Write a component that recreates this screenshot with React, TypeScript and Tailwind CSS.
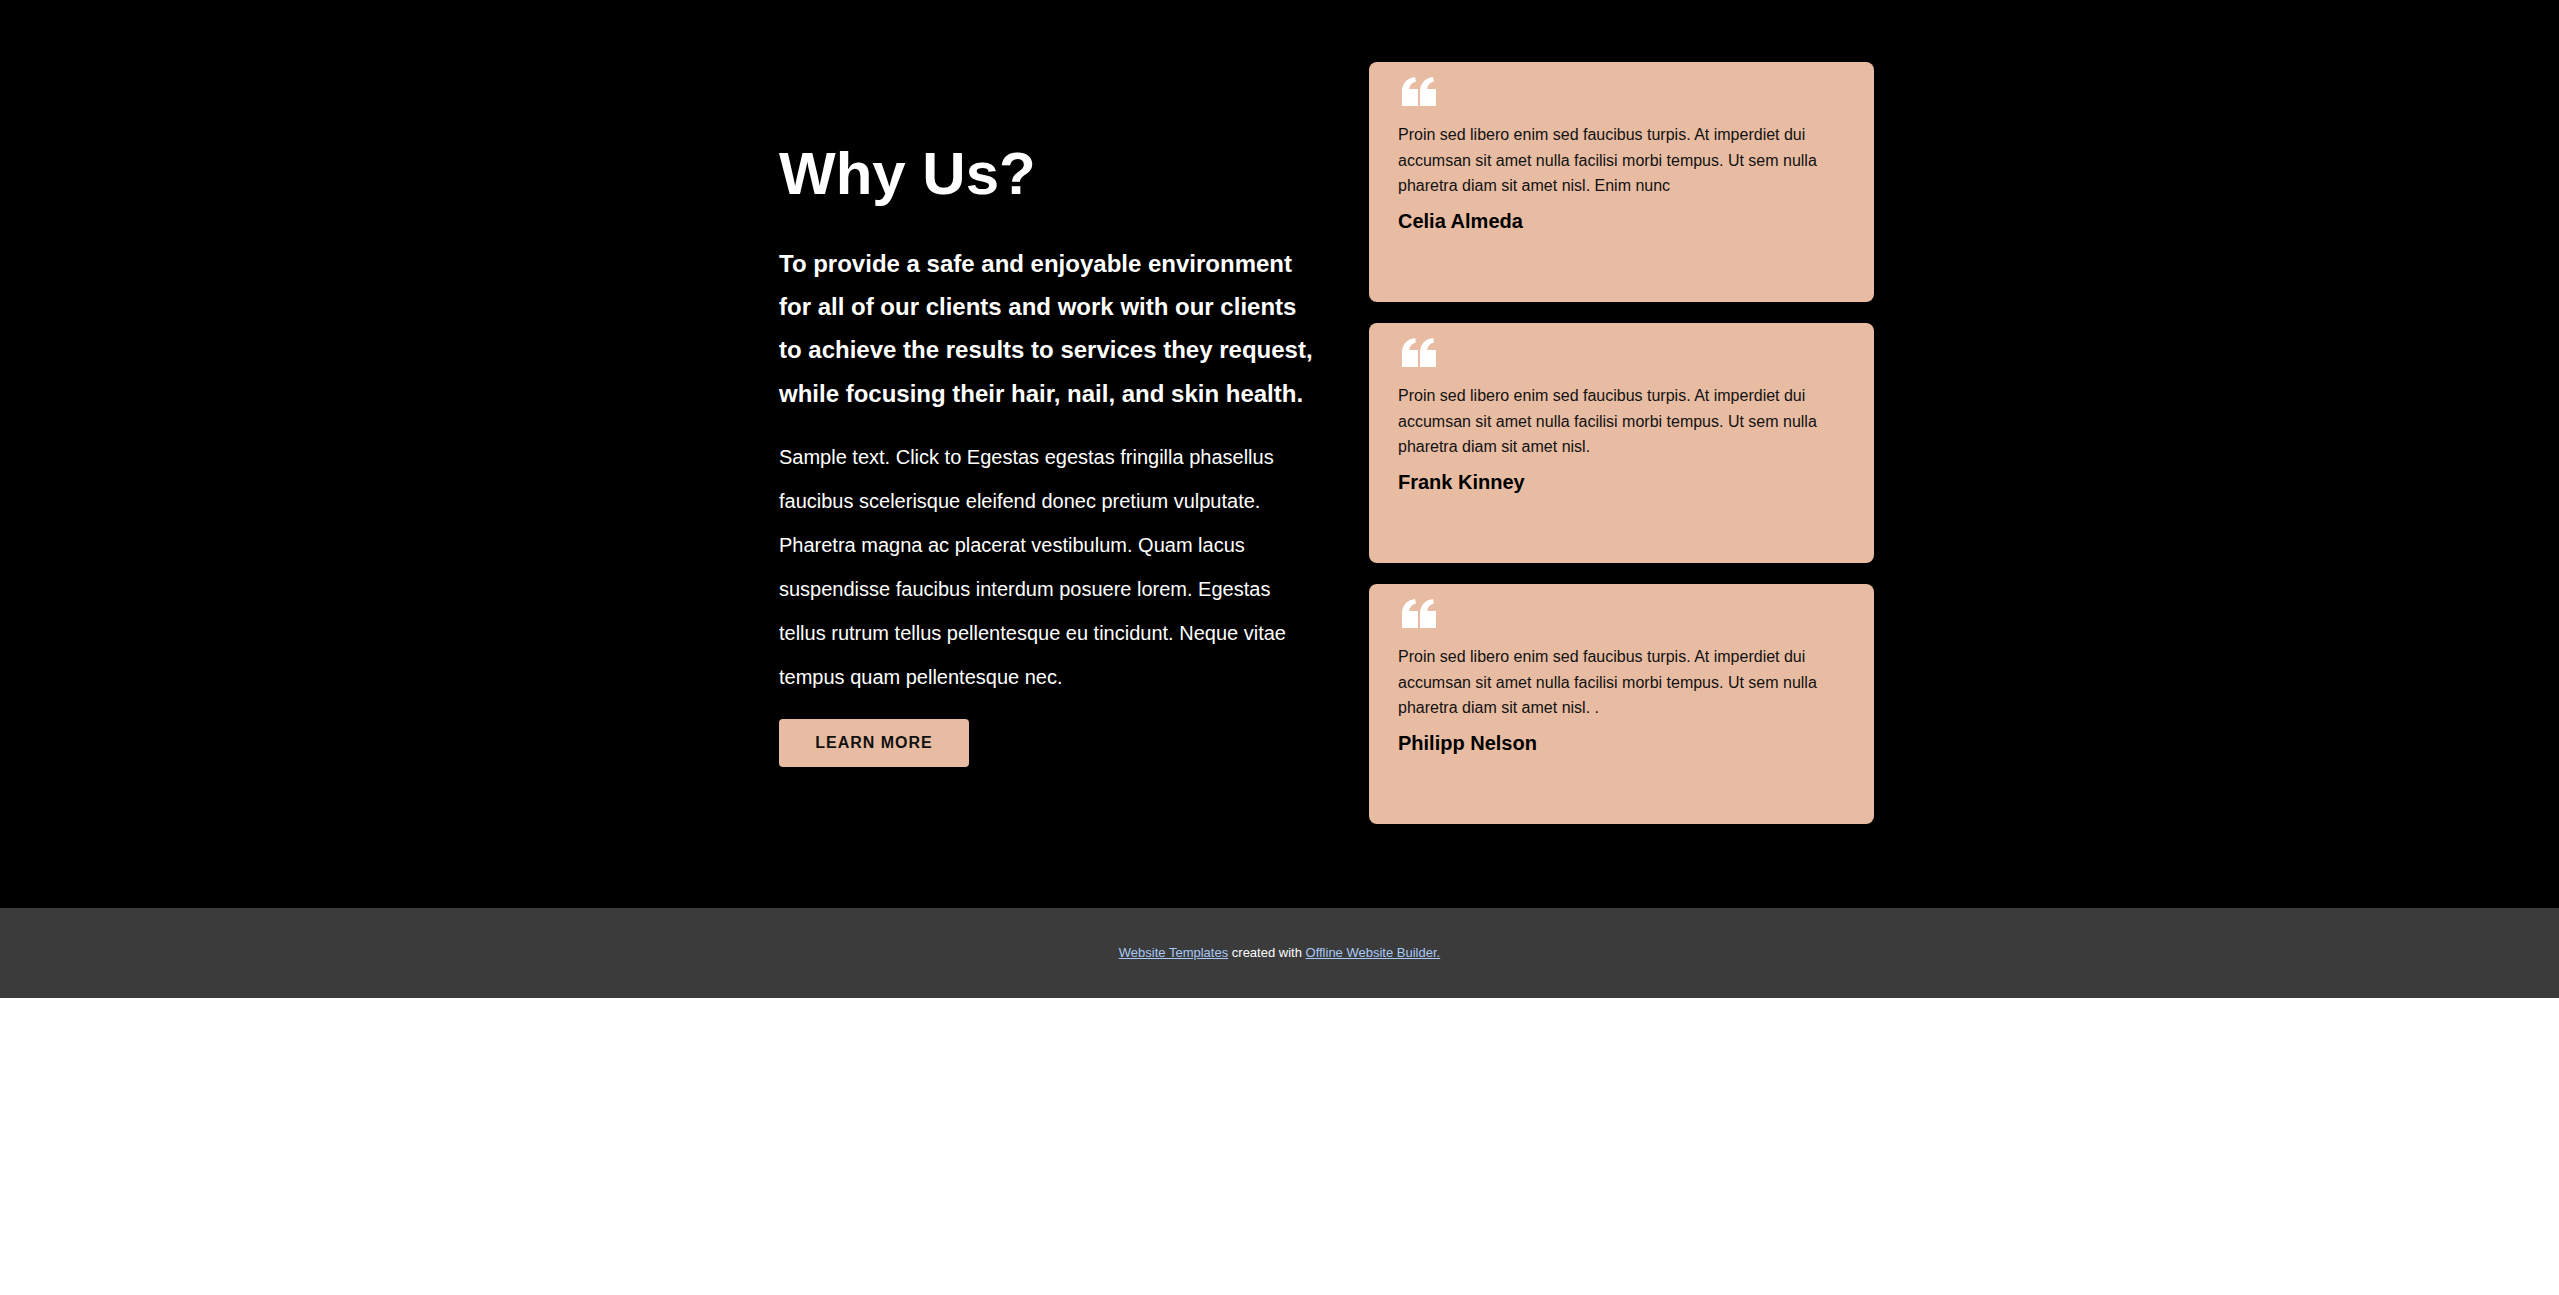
const testimonials = [
  {
    name: "Celia Almeda",
    text: "Proin sed libero enim sed faucibus turpis. At imperdiet dui accumsan sit amet nulla facilisi morbi tempus. Ut sem nulla pharetra diam sit amet nisl. Enim nunc",
  },
  {
    name: "Frank Kinney",
    text: "Proin sed libero enim sed faucibus turpis. At imperdiet dui accumsan sit amet nulla facilisi morbi tempus. Ut sem nulla pharetra diam sit amet nisl.",
  },
  {
    name: "Philipp Nelson",
    text: "Proin sed libero enim sed faucibus turpis. At imperdiet dui accumsan sit amet nulla facilisi morbi tempus. Ut sem nulla pharetra diam sit amet nisl. .",
  },
];

function QuoteMark() {
  // two stylised opening quote marks
  return (
    <svg width="38" height="29" viewBox="0 0 38 29" className="block">
      <path
        d="M4 29 L4 15 C4 7 8 1.5 17 0 L18 4.5 C13.5 6 11.5 8.5 11.3 12 L20 12 L20 29 Z"
        fill="#ffffff"
      />
      <path
        d="M22 29 L22 15 C22 7 26 1.5 35 0 L36 4.5 C31.5 6 29.5 8.5 29.3 12 L38 12 L38 29 Z"
        fill="#ffffff"
      />
    </svg>
  );
}

export default function App() {
  return (
    <div className="font-['Liberation_Sans',Arial,sans-serif]">
      <section className="bg-black pt-[62px] pb-[84px]">
        <div className="ml-[779px] flex items-start gap-[52px]">
          {/* Left column */}
          <div className="w-[538px] mt-[79px] text-white">
            <h2 className="text-[60px] leading-[66px] font-bold">Why Us?</h2>
            <p className="mt-[35px] text-[24px] leading-[1.8] font-bold">
              To provide a safe and enjoyable environment for all of our clients
              and work with our clients to achieve the results to services they
              request, while focusing their hair, nail, and skin health.
            </p>
            <p className="mt-[20px] text-[20px] leading-[2.2]">
              Sample text. Click to Egestas egestas fringilla phasellus faucibus
              scelerisque eleifend donec pretium vulputate. Pharetra magna ac
              placerat vestibulum. Quam lacus suspendisse faucibus interdum
              posuere lorem. Egestas tellus rutrum tellus pellentesque eu
              tincidunt. Neque vitae tempus quam pellentesque nec.
            </p>
            <a
              href="#"
              className="mt-[20px] flex h-[48px] w-[190px] items-center justify-center rounded-[4px] bg-[#e8bca2] text-[16px] font-bold tracking-[1px] text-[#111111]"
            >
              LEARN MORE
            </a>
          </div>

          {/* Testimonials */}
          <div className="w-[505px] flex flex-col gap-[21px]">
            {testimonials.map((t) => (
              <div
                key={t.name}
                className="h-[240px] rounded-[8px] bg-[#e8bca2] px-[29px] pt-[15px] text-[#111111]"
              >
                <QuoteMark />
                <p className="mt-[16px] text-[16px] leading-[1.6]">{t.text}</p>
                <h5 className="mt-[10px] text-[20px] leading-[24px] font-bold text-black">
                  {t.name}
                </h5>
              </div>
            ))}
          </div>
        </div>
      </section>

      <footer className="flex h-[90px] items-center justify-center bg-[#3b3b3b] text-[13px] text-white">
        <p>
          <a href="#" className="text-[#a8c8f5] underline">
            Website Templates
          </a>{" "}
          created with{" "}
          <a href="#" className="text-[#a8c8f5] underline">
            Offline Website Builder.
          </a>
        </p>
      </footer>
    </div>
  );
}
